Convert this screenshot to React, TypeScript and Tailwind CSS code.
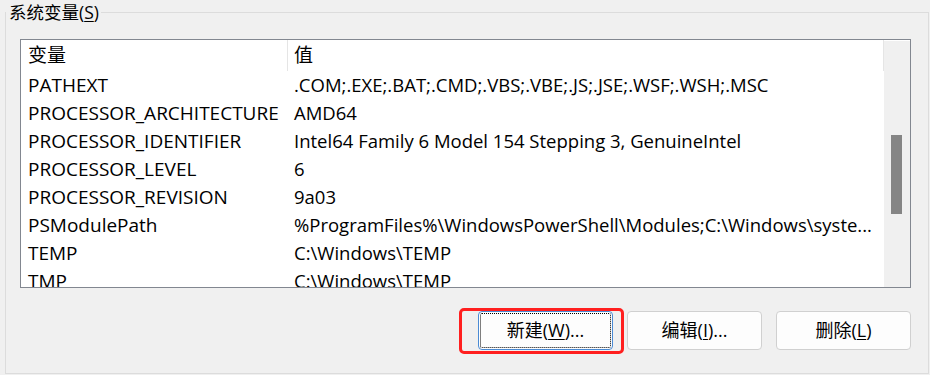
const rows: [string, string][] = [
  ["PATHEXT", ".COM;.EXE;.BAT;.CMD;.VBS;.VBE;.JS;.JSE;.WSF;.WSH;.MSC"],
  ["PROCESSOR_ARCHITECTURE", "AMD64"],
  ["PROCESSOR_IDENTIFIER", "Intel64 Family 6 Model 154 Stepping 3, GenuineIntel"],
  ["PROCESSOR_LEVEL", "6"],
  ["PROCESSOR_REVISION", "9a03"],
  ["PSModulePath", "%ProgramFiles%\\WindowsPowerShell\\Modules;C:\\Windows\\syste..."],
  ["TEMP", "C:\\Windows\\TEMP"],
  ["TMP", "C:\\Windows\\TEMP"],
];

function Btn({ label, hotkey, rest, focused }: { label: string; hotkey: string; rest: string; focused?: boolean }) {
  return (
    <button
      className={`relative w-[135px] h-[39px] rounded-[4px] border bg-[#fdfdfd] text-[18px] leading-[37px] text-black ${
        focused ? "border-[#4a8ad4]" : "border-[#d0d0d0]"
      }`}
    >
      {focused && (
        <span className="absolute inset-[1px] border border-dotted border-black rounded-[2px]" />
      )}
      {label}(<span className="underline underline-offset-2">{hotkey}</span>){rest}
    </button>
  );
}

export default function App() {
  return (
    <div
      className="w-[930px] h-[375px] overflow-hidden bg-[#f0f0f0] pl-[5px] text-black"
      style={{ fontFamily: '"Open Sans", "Noto Sans CJK SC", sans-serif' }}
    >
      <fieldset className="w-[924px] h-[374px] border border-[#dcdcdc]">
        <legend className="pl-[3px] pr-[2px] text-[17.5px] leading-[24px]">
          系统变量(<span className="underline underline-offset-2">S</span>)
        </legend>

        <div className="mt-[15px] ml-[14px] w-[891px] h-[249px] border border-[#828790] bg-white flex">
          <div className="w-[863px] overflow-hidden">
            <div className="grid grid-cols-[267px_1fr] h-[31px] leading-[31px] text-[19px]">
              <div className="pl-[7px] border-r border-[#e5e5e5]">变量</div>
              <div className="pl-[6px] border-r border-[#e5e5e5]">值</div>
            </div>
            {rows.map(([name, value]) => (
              <div key={name} className="grid grid-cols-[267px_1fr] h-[28px] leading-[28px] whitespace-nowrap">
                <div className="pl-[7px] overflow-hidden text-[19px]">{name}</div>
                <div className="pl-[6px] overflow-hidden text-[18.5px]">{value}</div>
              </div>
            ))}
          </div>
          <div className="w-[26px] mt-[1px] bg-[#f0f0f0]">
            <div className="mt-[94px] ml-[7px] w-[11px] h-[79px] bg-[#858585]" />
          </div>
        </div>

        <div className="mt-[23px] mr-[17px] flex justify-end gap-[14px]">
          <div className="relative">
            <Btn label="新建" hotkey="W" rest="..." focused />
            <div className="absolute left-[-19px] right-[-11px] top-[-3px] bottom-[-4px] border-[3px] border-[#ff1f1f] rounded-[5px]" />
          </div>
          <Btn label="编辑" hotkey="I" rest="..." />
          <Btn label="删除" hotkey="L" rest="" />
        </div>
      </fieldset>
    </div>
  );
}
